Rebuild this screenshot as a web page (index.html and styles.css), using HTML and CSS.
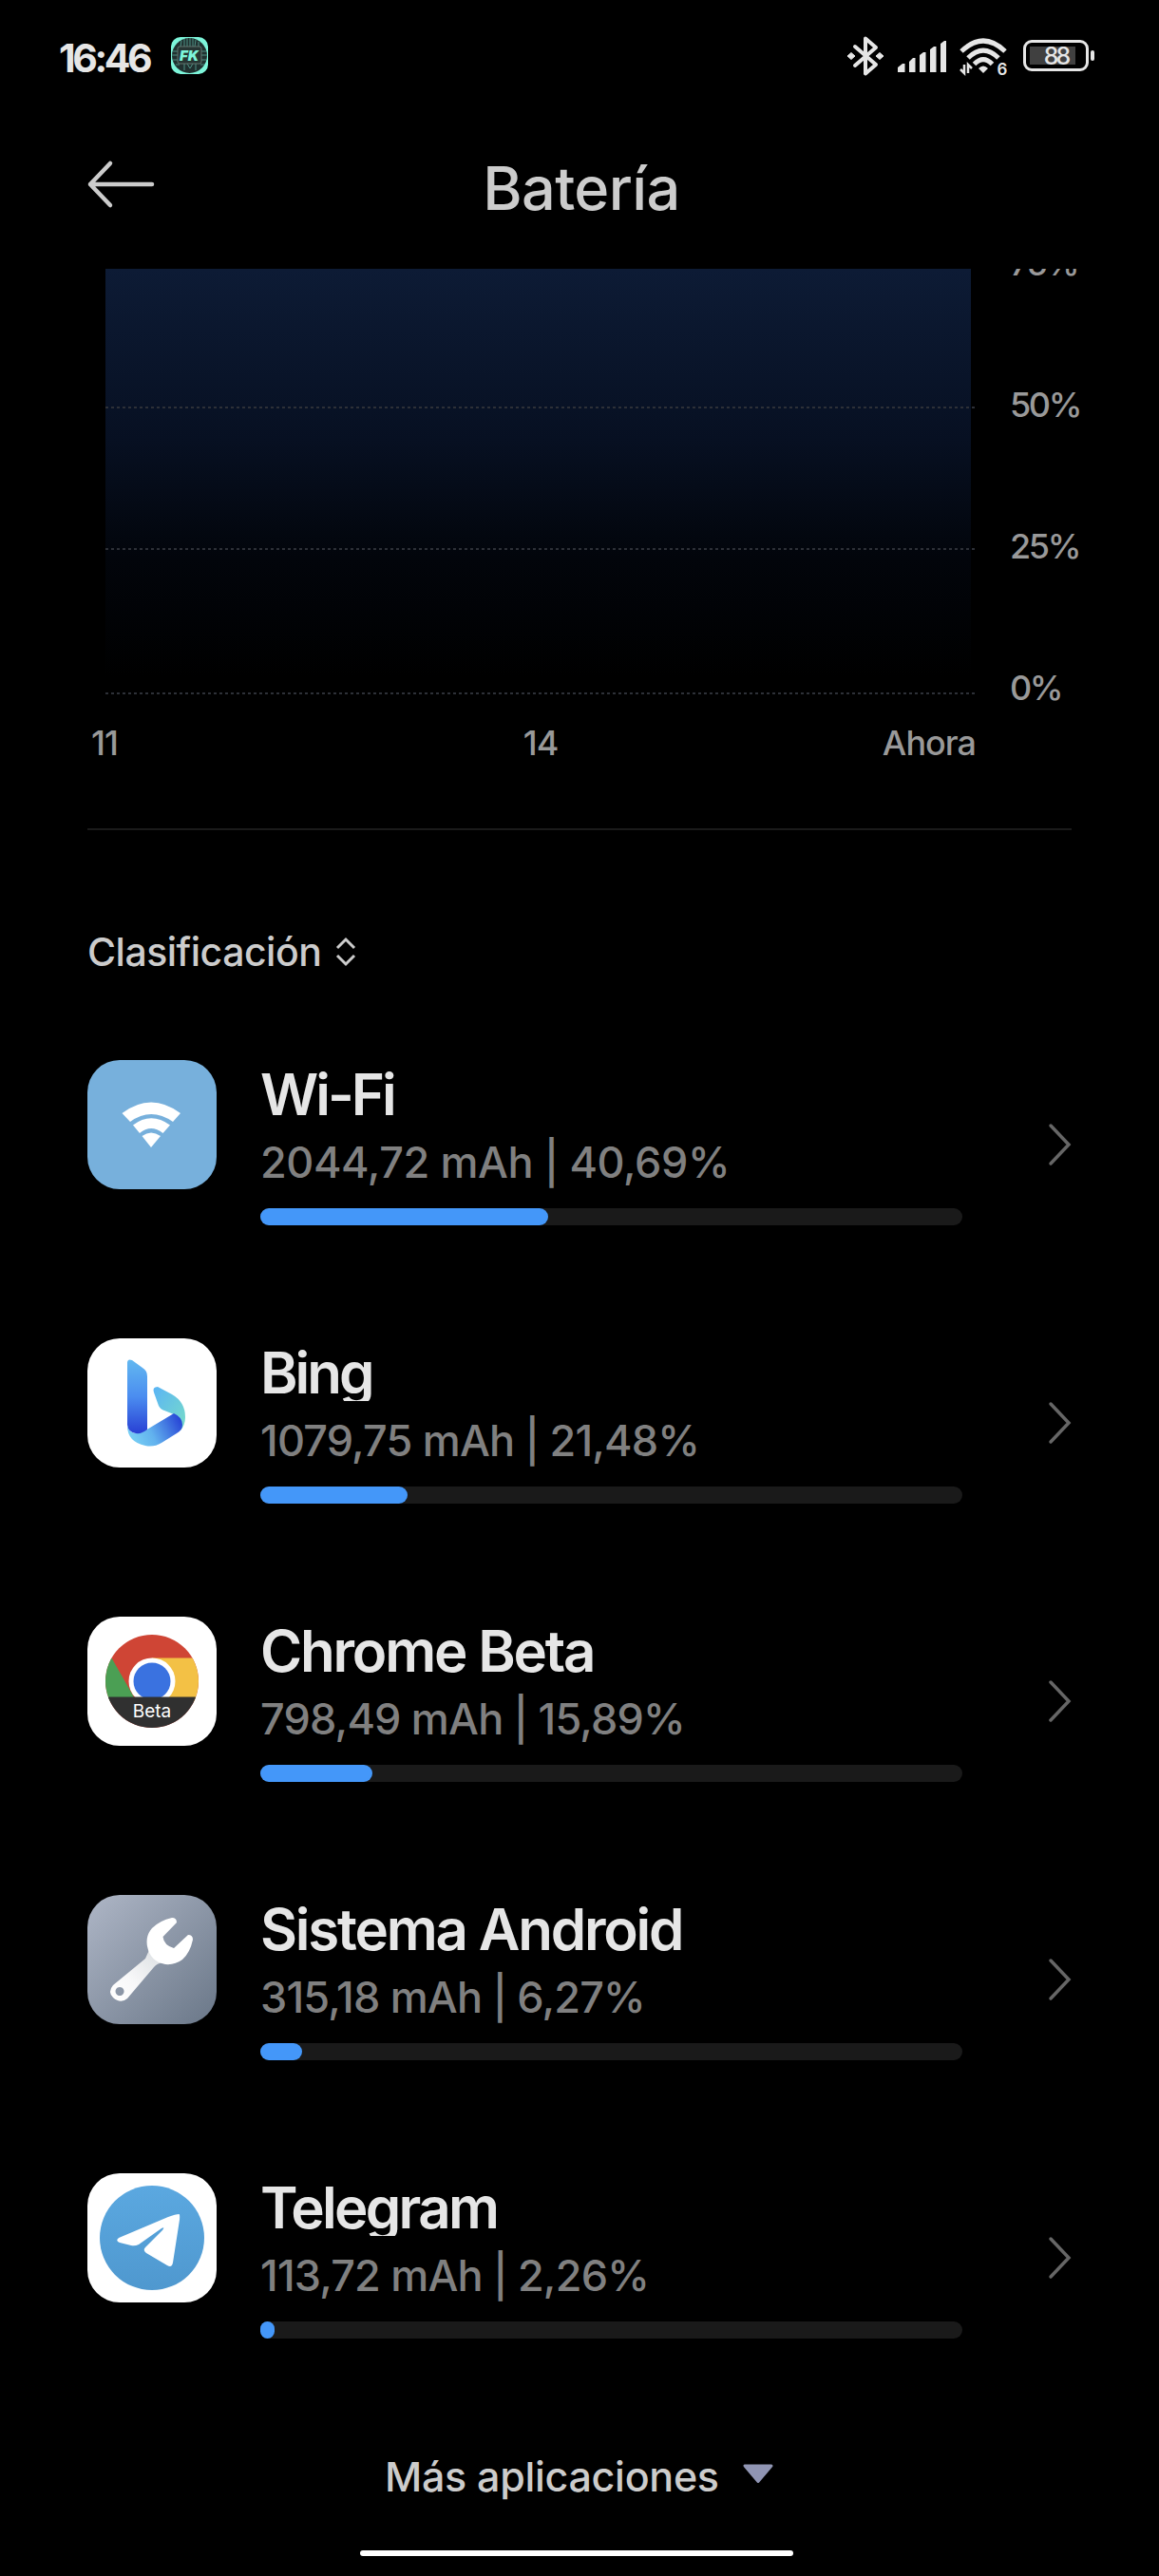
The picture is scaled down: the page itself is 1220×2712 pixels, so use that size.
FILE: index.html
```html
<!DOCTYPE html>
<html lang="es">
  <head>
    <meta charset="UTF-8" />
    <meta name="viewport" content="width=device-width, initial-scale=1.0" />
    <title>Batería</title>
    <link rel="stylesheet" href="styles.css">
  </head>
  <body>
    <div class="status-bar">
      <span class="clock">16:46</span>
      <svg class="fk-icon" viewBox="0 0 39 39">
        <rect width="39" height="39" rx="10" fill="#7df5da" />
        <circle cx="19.500" cy="19.500" r="18.500" fill="#20302f" />
        <g fill="none" stroke="#4d8f84" stroke-width="1">
          <path d="M14 2v8M17 1v9M20 1v9M23 1v9M26 3l-1 7M14 28v7M17 28l3 5 3-5M26 28v7M11 4l-1 6M29 5v5" />
          <path d="M2 15h6M1 19h7M2 24h6M31 15h6M31 19h7M31 24h6M5 29h4M31 29h4" />
        </g>
        <rect x="7" y="10" width="25" height="18" rx="2" fill="#263533" stroke="#60756f" stroke-width="1" />
        <text x="19" y="25" text-anchor="middle">FK</text>
      </svg>
      <div class="status-icons">
        <svg width="38" height="42" viewBox="0 0 38 42">
          <path d="M8 11l22 19-11 9.500V2.500L30 12 8 31" fill="none" stroke="#e6e6e6" stroke-width="4" stroke-linejoin="round" stroke-linecap="round" />
          <path d="M4 17.500l4 3.500-4 3.500L0 21zM34 17.500l4 3.500-4 3.500-4-3.500z" fill="#e6e6e6" stroke="#e6e6e6" stroke-width="1" />
        </svg>
        <svg class="signal" width="51" height="33" viewBox="0 0 51 33">
          <path d="M0 33v-5l5-4h2.500v9zM12 33V22l4-4h2.500v15zM23 33V15l4-3h2.500v21zM34 33V9l4-3h2.500v27zM45 33V3l4-3h2v33z" fill="#e6e6e6" />
        </svg>
        <svg class="wifi" width="50" height="40" viewBox="0 0 50 40">
          <g fill="none" stroke="#e6e6e6" stroke-width="5">
            <path d="M2 14Q25-8 48 14" />
            <path d="M9 21Q25 5 41 21" />
            <path d="M15.500 27.500Q25 18 34.500 27.500" />
          </g>
          <path d="M25 37l-5-5q5-5 10 0z" fill="#e6e6e6" />
          <path d="M5 28v9l-4-4M9 37v-9l4 4" fill="none" stroke="#e6e6e6" stroke-width="2.500" />
          <text x="39.500" y="38.500">6</text>
        </svg>
        <div class="battery"><div class="battery-level"></div><span>88</span></div>
      </div>
    </div>

    <header>
      <svg width="70" height="50" viewBox="0 0 70 50">
        <path d="M24 3L3 25l21 22M3 25h65" fill="none" stroke="#ccc" stroke-width="4.500" stroke-linejoin="round" stroke-linecap="round" />
      </svg>
      <h1>Batería</h1>
    </header>

    <main>
      <section class="chart">
        <div class="plot">
          <div class="grid-line line-50"></div>
          <div class="grid-line line-25"></div>
          <div class="grid-line line-0"></div>
        </div>
        <div class="levels">
          <span>75%</span>
          <span>50%</span>
          <span>25%</span>
          <span>0%</span>
        </div>
      </section>
      <div class="hours">
        <span>11</span>
        <span>14</span>
        <span class="now">Ahora</span>
      </div>

      <div class="sort">
        <span>Clasificación</span>
        <svg width="22" height="30" viewBox="0 0 22 30">
          <path d="M2 11l9-9 9 9M2 19l9 9 9-9" fill="none" stroke="#ccc" stroke-width="3" />
        </svg>
      </div>

      <section class="apps">
        <div class="app wifi-app">
          <svg class="app-icon" viewBox="0 0 136 136">
            <rect width="136" height="136" rx="34" fill="#77b0dc" />
            <path d="M36.500 56Q67 33 98 56l-8 9Q67 49 45 65z" fill="#fff" />
            <path d="M48 68.500Q67 54 87 68.500l-7.500 8.500Q67 67 55 77z" fill="#fff" />
            <path d="M57.500 80Q67 73 77 80L67 92z" fill="#fff" />
          </svg>
          <div class="app-info">
            <h2>Wi-Fi</h2>
            <p>2044,72 mAh | 40,69%</p>
            <div class="bar"><div style="width: 41%"></div></div>
          </div>
          <svg class="chevron" viewBox="0 0 24 44"><path d="M2 2l19 20L2 42" /></svg>
        </div>

        <div class="app bing">
          <svg class="app-icon" viewBox="0 0 136 136">
            <defs>
              <linearGradient id="bing-stem" x1="0" y1="0" x2="0" y2="1">
                <stop offset="0" stop-color="#62b8f0" />
                <stop offset="0.500" stop-color="#4b8df0" />
                <stop offset="1" stop-color="#2840d4" />
              </linearGradient>
              <linearGradient id="bing-base" x1="0" y1="0.600" x2="1" y2="0.300">
                <stop offset="0" stop-color="#78d0f4" />
                <stop offset="0.400" stop-color="#62b2ee" />
                <stop offset="1" stop-color="#2745d6" />
              </linearGradient>
              <linearGradient id="bing-bowl" x1="0" y1="0" x2="1" y2="1">
                <stop offset="0" stop-color="#5ab4f5" />
                <stop offset="1" stop-color="#78dcc8" />
              </linearGradient>
            </defs>
            <rect width="136" height="136" rx="34" fill="#fff" />
            <path d="M74 51l15 8q14 8 14 24 0 8-5 14L91 80l-10-4q-4-1-6-5l-5-14q-2-6 4-6z" fill="url(#bing-bowl)" />
            <path d="M42 92q2 8 10 8 5 0 9-3l30-18q9 4 9 12 0 6-6 9l-16 10q-8 5-17 3-19-4-19-21z" fill="url(#bing-base)" />
            <path d="M42 26q0-5 5-3l11 8q5 3 5 9v56q-6 5-12 4-8-1-9-9z" fill="url(#bing-stem)" />
          </svg>
          <div class="app-info">
            <h2>Bing</h2>
            <p>1079,75 mAh | 21,48%</p>
            <div class="bar"><div style="width: 21%"></div></div>
          </div>
          <svg class="chevron" viewBox="0 0 24 44"><path d="M2 2l19 20L2 42" /></svg>
        </div>

        <div class="app chrome">
          <svg class="app-icon" viewBox="0 0 136 136">
            <defs>
              <clipPath id="chrome-disc"><circle cx="68" cy="68" r="49" /></clipPath>
            </defs>
            <rect width="136" height="136" rx="34" fill="#fff" />
            <g clip-path="url(#chrome-disc)">
              <rect x="19" y="19" width="98" height="98" fill="#cf4535" />
              <path d="M68 43.500h60V90H68z" fill="#f3c145" />
              <path d="M25.500 43.500L52 90H10V43z" fill="#4b9f54" />
              <circle cx="68" cy="68" r="24.500" fill="#fff" />
              <circle cx="68" cy="68" r="19.500" fill="#3a72e0" />
              <rect x="19" y="84.500" width="98" height="33" fill="#303030" />
            </g>
            <text class="beta" x="68" y="105.500" text-anchor="middle">Beta</text>
          </svg>
          <div class="app-info">
            <h2>Chrome Beta</h2>
            <p>798,49 mAh | 15,89%</p>
            <div class="bar"><div style="width: 16%"></div></div>
          </div>
          <svg class="chevron" viewBox="0 0 24 44"><path d="M2 2l19 20L2 42" /></svg>
        </div>

        <div class="app android">
          <svg class="app-icon" viewBox="0 0 136 136">
            <defs>
              <linearGradient id="steel" x1="0" y1="0" x2="1" y2="1">
                <stop offset="0" stop-color="#aeb6c6" />
                <stop offset="1" stop-color="#6a7788" />
              </linearGradient>
              <linearGradient id="handle" x1="1" y1="0" x2="0" y2="1">
                <stop offset="0" stop-color="#d9dde0" />
                <stop offset="0.600" stop-color="#f8f8f9" />
                <stop offset="1" stop-color="#fff" />
              </linearGradient>
            </defs>
            <rect width="136" height="136" rx="34" fill="url(#steel)" />
            <path fill-rule="evenodd" d="M65 58L61 67 27 95q-6 7 0 13 8 7 15 1l28-33q3-4 10-5zM34 97a4.500 4.500 0 1 0 .1 0z" fill="url(#handle)" />
            <path d="M89 24q5 0 5 5L79.500 44q1 9 11.500 12l15-14q5 0 5 5-3 14-11 21-8 6-18 5Q66 70 63 54q-2-11 5-19 8-8 21-11z" fill="#fff" />
          </svg>
          <div class="app-info">
            <h2>Sistema Android</h2>
            <p>315,18 mAh | 6,27%</p>
            <div class="bar"><div style="width: 6%"></div></div>
          </div>
          <svg class="chevron" viewBox="0 0 24 44"><path d="M2 2l19 20L2 42" /></svg>
        </div>

        <div class="app telegram">
          <svg class="app-icon" viewBox="0 0 136 136">
            <defs>
              <linearGradient id="sky" x1="0" y1="0" x2="0" y2="1">
                <stop offset="0" stop-color="#5ba8e0" />
                <stop offset="1" stop-color="#4f98cf" />
              </linearGradient>
            </defs>
            <rect width="136" height="136" rx="34" fill="#fff" />
            <circle cx="68" cy="68" r="55" fill="url(#sky)" />
            <path d="M33 68l52-22q8-3 11.500-3 1 0 .5 6l-7 45q-1 6-6 3L62 84q-4-3-1-6l18-18q3-4-1-2L54 75q-4 2-8 1l-12-3q-5-2-1-5z" fill="#fff" />
          </svg>
          <div class="app-info">
            <h2>Telegram</h2>
            <p>113,72 mAh | 2,26%</p>
            <div class="bar"><div style="width: 2%"></div></div>
          </div>
          <svg class="chevron" viewBox="0 0 24 44"><path d="M2 2l19 20L2 42" /></svg>
        </div>
      </section>

      <div class="more">
        <span>Más aplicaciones</span>
        <svg width="32" height="21" viewBox="0 0 32 21">
          <path d="M2 2h28L16 18.500z" fill="#9095b3" stroke="#9095b3" stroke-width="3" stroke-linejoin="round" />
        </svg>
      </div>
    </main>
    <div class="home-bar"></div>
  </body>
</html>
```

FILE: styles.css
```css
* {
  box-sizing: border-box;
}
body {
  margin: 0;
  width: 1220px;
  height: 2712px;
  overflow: hidden;
  background: #000;
  color: #ccc;
  font-family: Inter, "Liberation Sans", sans-serif;
}
h1,
h2,
p {
  margin: 0;
}
svg {
  display: block;
  flex: none;
  overflow: visible;
}
span,
h1,
h2,
p {
  white-space: nowrap;
}

/* status bar */
.status-bar {
  display: flex;
  align-items: center;
  height: 117px;
  padding: 0 68px 0 62px;
  color: #e6e6e6;
}
.clock {
  width: 118px;
  font-size: 41px;
  line-height: 48px;
  font-weight: 700;
  letter-spacing: -3.4px;
  padding-top: 4px;
}
.fk-icon {
  width: 39px;
  height: 39px;
}
.fk-icon text {
  font-size: 15px;
  font-weight: 900;
  font-style: italic;
  fill: #7df5da;
}
.status-icons {
  display: flex;
  align-items: center;
  margin-left: auto;
}
.signal {
  margin: 2px 0 0 15px;
}
.wifi {
  margin: 2px 0 0 14px;
}
.wifi text {
  font-size: 17px;
  font-weight: 600;
  fill: #e6e6e6;
}
.battery {
  position: relative;
  width: 69px;
  height: 33px;
  margin: 0 6px 0 17px;
  border: 3px solid #e6e6e6;
  border-radius: 9px;
  padding: 4px;
  text-align: center;
}
.battery::after {
  content: "";
  position: absolute;
  right: -9px;
  top: 8px;
  width: 4px;
  height: 11px;
  border-radius: 2px;
  background: #e6e6e6;
}
.battery-level {
  width: 48px;
  height: 19px;
  background: #404040;
}
.battery span {
  position: absolute;
  left: 0;
  right: 0;
  top: 1px;
  font-size: 25px;
  line-height: 27px;
  font-weight: 500;
  letter-spacing: -3px;
}

/* title */
header {
  display: flex;
  align-items: center;
  height: 166px;
  padding: 0 92px;
}
header svg {
  margin-bottom: 12px;
}
h1 {
  flex: 1;
  padding: 0 66px 5px 0;
  text-align: center;
  font-size: 63px;
  line-height: 76px;
  font-weight: 500;
  letter-spacing: -0.6px;
}

/* chart */
.chart {
  display: flex;
  height: 472px;
  overflow: hidden;
  padding-left: 111px;
}
.plot {
  position: relative;
  width: 911px;
  height: 448px;
  background: linear-gradient(#0d1b35, #071022 40%, #02050b 68%, #000 96%);
}
.grid-line {
  position: absolute;
  left: 0;
  width: 915px;
  height: 2px;
  background: repeating-linear-gradient(90deg, #2d3037 0 3px, transparent 3px 6px);
}
.line-50 {
  top: 145px;
}
.line-25 {
  top: 294px;
}
.line-0 {
  top: 446px;
}
.levels {
  margin: -36px 0 0 41px;
}
.levels span {
  display: block;
  height: 149px;
  line-height: 61px;
}
.levels span,
.hours span {
  color: #999;
  font-size: 36px;
  font-weight: 500;
  letter-spacing: -1px;
}
.levels span {
  letter-spacing: -2.4px;
}
.hours {
  display: grid;
  grid-template-columns: 1fr auto 1fr;
  height: 119px;
  margin: 0 92px;
  padding: 5px 86px 0 4px;
  line-height: 44px;
  border-bottom: 2px solid #1a1a1a;
}
.hours .now {
  margin-right: 15px;
  text-align: right;
}

.sort {
  display: flex;
  align-items: center;
  gap: 15px;
  height: 242px;
  padding: 13px 0 0 92px;
  font-size: 41px;
  font-weight: 500;
  letter-spacing: -0.5px;
}

/* app list */
.app {
  display: flex;
  height: 293px;
  padding: 0 92px;
}
.app-icon {
  width: 136px;
  height: 136px;
}
.app-info {
  width: 739px;
  margin-left: 46px;
}
h2 {
  height: 66px;
  overflow: hidden;
  color: #e6e6e6;
  font-size: 60px;
  line-height: 72px;
  font-weight: 600;
  letter-spacing: -2.2px;
}
.app-info p {
  margin-top: 14px;
  height: 76px;
  line-height: 56px;
  font-size: 45px;
  font-weight: 500;
  letter-spacing: -0.8px;
  color: #808080;
}
.wifi-app h2,
.bing h2 {
  letter-spacing: -3px;
}
.telegram h2 {
  letter-spacing: -2.7px;
}
.wifi-app p {
  letter-spacing: -0.4px;
}
.bar {
  height: 18px;
  border-radius: 9px;
  background: #1a1a1a;
}
.bar div {
  height: 18px;
  border-radius: 9px;
  background: #4497f9;
}
.chevron {
  width: 24px;
  height: 44px;
  margin: 67px 0 0 auto;
}
.chevron path {
  fill: none;
  stroke: #666;
  stroke-width: 3.5;
  stroke-linecap: round;
}
.beta {
  font-size: 19px;
  fill: #fff;
}

.more {
  display: flex;
  height: 104px;
  padding: 0 0 0 405px;
  gap: 25px;
  font-size: 43px;
  font-weight: 500;
  letter-spacing: -0.3px;
}
.more svg {
  margin-top: 13px;
}
.home-bar {
  width: 456px;
  height: 6px;
  margin-left: 379px;
  border-radius: 3px;
  background: #fff;
}
```
